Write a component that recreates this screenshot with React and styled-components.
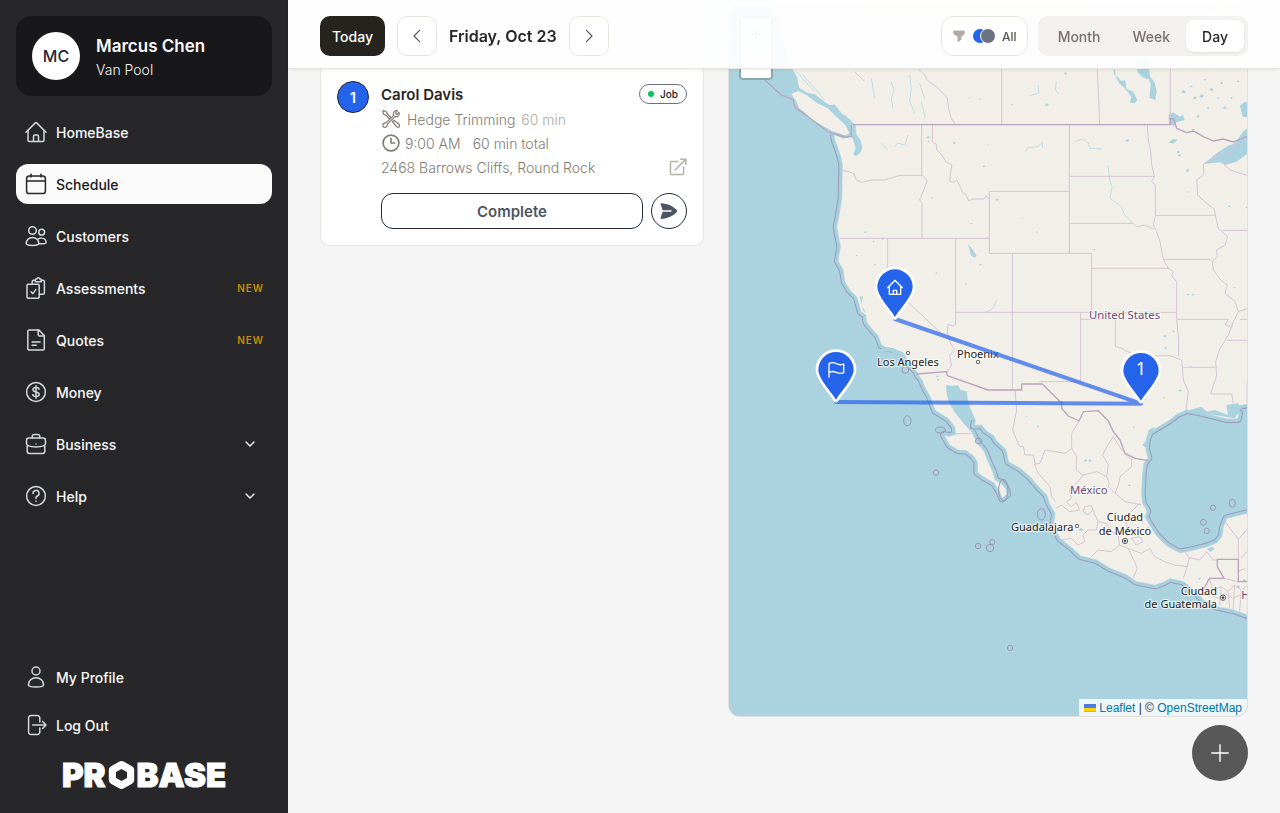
import React from 'react';
import styled, { createGlobalStyle, css } from 'styled-components';

const GlobalStyle = createGlobalStyle`
  *, *::before, *::after {
    box-sizing: border-box;
  }

  body {
    margin: 0;
    background: #f5f5f5;
    color: #292524;
    font-family: Inter, "Liberation Sans", sans-serif;
    font-size: 14px;
  }

  button {
    font: inherit;
    cursor: pointer;
  }
`;

const Layout = styled.div`
  display: grid;
  grid-template-columns: 288px minmax(0, 1fr);
  min-height: 100vh;
`;

// Sidebar
const Sidebar = styled.aside`
  position: sticky;
  top: 0;
  display: flex;
  flex-direction: column;
  height: 100vh;
  padding: 16px 16px 24px;
  background: #27272a;
  color: #fafafa;
`;

const Profile = styled.div`
  display: flex;
  align-items: center;
  gap: 16px;
  padding: 16px;
  border-radius: 16px;
  background: #18181a;
`;

const Avatar = styled.div`
  display: flex;
  align-items: center;
  justify-content: center;
  width: 48px;
  height: 48px;
  border-radius: 50%;
  background: #fff;
  color: #1f2937;
  font-size: 16px;
  font-weight: 500;
`;

const ProfileName = styled.div`
  font-size: 17px;
  font-weight: 600;
  line-height: 28px;
`;

const ProfileTeam = styled.div`
  font-size: 14px;
  font-weight: 300;
  line-height: 20px;
  color: #f4f4f5;
`;

const Nav = styled.nav`
  display: flex;
  flex-direction: column;
  gap: ${({ $gap }) => $gap};
  margin-top: ${({ $push }) => ($push ? 'auto' : '16px')};
`;

const navItem = css`
  display: flex;
  align-items: center;
  gap: 8px;
  height: 40px;
  padding: 0 8px;
  border: 0;
  border-radius: 12px;
  background: ${({ $active }) => ($active ? '#fafafa' : 'transparent')};
  color: ${({ $active }) => ($active ? '#18181b' : '#fafafa')};
  font-size: 14px;
  font-weight: 500;
  text-align: left;
  text-decoration: none;

  svg {
    flex: none;
    color: ${({ $active }) => ($active ? '#27272a' : '#d4d8dc')};
  }
`;

const NavLink = styled.a`
  ${navItem}
`;

const NavButton = styled.button`
  ${navItem}
`;

const NavLabel = styled.span`
  flex: 1;
`;

const NewTag = styled.span`
  color: #ca8a04;
  font-size: 10px;
  font-weight: 600;
  letter-spacing: 1px;
`;

// Keeps the group chevron clear of the row edge
const ChevronSlot = styled.span`
  display: flex;
  padding-right: 6px;

  svg {
    color: #fafafa;
  }
`;

const Logo = styled.div`
  display: flex;
  align-items: center;
  justify-content: center;
  gap: 2px;
  height: 28px;
  margin-top: 16px;
  color: #fff;
  font-size: 33px;
  font-weight: 900;
  line-height: 28px;
  -webkit-text-stroke: 1px #fff;
`;

// Toolbar
const Main = styled.main`
  min-width: 0;
`;

const Toolbar = styled.header`
  position: sticky;
  top: 0;
  z-index: 10;
  display: flex;
  align-items: center;
  justify-content: space-between;
  padding: 16px 32px 12px;
  border-bottom: 1px solid #e7e5e0;
  background: rgba(255, 255, 255, 0.88);
  backdrop-filter: blur(40px);
  box-shadow: 0 1px 3px rgba(0, 0, 0, 0.08);
`;

const ToolbarGroup = styled.div`
  display: flex;
  align-items: center;
  gap: ${({ $gap }) => $gap};
`;

const TodayButton = styled.button`
  height: 40px;
  padding: 0 12px;
  border: 0;
  border-radius: 10px;
  background: #26241f;
  color: #fff;
  font-weight: 500;
`;

const StepButton = styled.button`
  display: flex;
  align-items: center;
  justify-content: center;
  width: 40px;
  height: 40px;
  padding: 0;
  border: 1px solid #e7e5e0;
  border-radius: 10px;
  background: #fff;
  color: #57534e;
`;

const DateTitle = styled.h1`
  margin: 0;
  color: #292524;
  font-size: 16px;
  font-weight: 600;
`;

const FilterButton = styled.button`
  display: flex;
  align-items: center;
  gap: 6px;
  height: 40px;
  padding: 0 10px;
  border: 1px solid #e7e5e0;
  border-radius: 12px;
  background: #fff;
  color: #57534e;
  font-size: 12px;
  font-weight: 500;
`;

const Segments = styled.div`
  display: flex;
  padding: 4px;
  border-radius: 10px;
  background: rgba(231, 229, 228, 0.5);
`;

const Segment = styled.button`
  height: 32px;
  padding: 0 16px;
  border: 0;
  border-radius: 8px;
  background: ${({ $active }) => ($active ? '#fff' : 'transparent')};
  color: ${({ $active }) => ($active ? '#292524' : '#78716c')};
  font-weight: 500;
  box-shadow: ${({ $active }) => ($active ? '0 1px 2px rgba(0, 0, 0, 0.08)' : 'none')};
`;

// Schedule content, its top edge runs under the translucent toolbar
const Content = styled.div`
  display: grid;
  grid-template-columns: 384px minmax(0, 1fr);
  gap: 24px;
  margin-top: -64px;
  padding: 0 32px 96px;
`;

const JobList = styled.div`
  padding-top: 59px;
`;

const Card = styled.article`
  display: flex;
  gap: 12px;
  padding: 16px;
  border: 1px solid #e7e5e0;
  border-radius: 10px;
  background: #fff;
`;

const StopNumber = styled.div`
  display: flex;
  align-items: center;
  justify-content: center;
  flex: none;
  width: 32px;
  height: 32px;
  border: 1px solid #1f2937;
  border-radius: 50%;
  background: #2563eb;
  color: #fff;
  font-weight: 600;
`;

const CardBody = styled.div`
  flex: 1;
  min-width: 0;
`;

const CardHead = styled.div`
  display: flex;
  align-items: center;
  justify-content: space-between;
  height: 26px;
`;

const CardRow = styled.div`
  display: flex;
  align-items: center;
  gap: ${({ $gap }) => $gap || '6px'};
  height: 24px;
  color: #817d75;
  font-weight: 300;
`;

const AddressRow = styled(CardRow)`
  justify-content: space-between;
`;

const Customer = styled.h2`
  margin: 0;
  color: #292524;
  font-size: 15px;
  font-weight: 600;
`;

const Badge = styled.span`
  display: flex;
  align-items: center;
  gap: 6px;
  height: 20px;
  padding: 0 8px;
  border: 1px solid #6b7280;
  border-radius: 10px;
  color: #1c1917;
  font-size: 10px;
  font-weight: 500;

  &::before {
    content: "";
    width: 6px;
    height: 6px;
    border-radius: 50%;
    background: #00c950;
  }
`;

const Muted = styled.span`
  color: #aeaaa2;
`;

const Total = styled.span`
  margin-left: 8px;
`;

const OpenLink = styled.a`
  display: flex;
  color: #b5b2aa;
`;

const Actions = styled.div`
  display: flex;
  gap: 8px;
  margin-top: 14px;
`;

const CompleteButton = styled.button`
  flex: 1;
  height: 36px;
  border: 1px solid #1f2937;
  border-radius: 12px;
  background: #fff;
  color: #4b5563;
  font-size: 15px;
  font-weight: 600;
`;

const SendButton = styled.button`
  display: flex;
  align-items: center;
  justify-content: center;
  width: 36px;
  height: 36px;
  padding: 0;
  border: 1px solid #1f2937;
  border-radius: 50%;
  background: #fff;
  color: #4b5563;
`;

// Map
const MapPanel = styled.section`
  position: relative;
  height: 712px;
  overflow: hidden;
  border: 1px solid #e2e0da;
  border-radius: 12px;
  background: #aad3df;
`;

const MapSvg = styled.svg`
  display: block;
  width: 100%;
  height: 100%;

  .label {
    font-family: "Noto Sans", sans-serif;
    font-size: 33px;
    fill: #222;
    stroke: rgba(255, 255, 255, 0.7);
    stroke-width: 7px;
    stroke-linejoin: round;
    paint-order: stroke;
  }

  .country {
    fill: #6f4a77;
    font-size: 34px;
  }
`;

const ZoomControl = styled.div`
  position: absolute;
  top: 10px;
  left: 10px;
  display: flex;
  flex-direction: column;
  border: 2px solid rgba(0, 0, 0, 0.2);
  border-radius: 4px;
  overflow: hidden;
`;

const ZoomButton = styled.button`
  width: 30px;
  height: 30px;
  padding: 0;
  border: 0;
  background: #fff;
  color: #777;
  font-size: 20px;
  line-height: 28px;
`;

const Attribution = styled.div`
  position: absolute;
  right: 0;
  bottom: 0;
  display: flex;
  align-items: center;
  gap: 3px;
  height: 17px;
  padding: 0 5px;
  background: rgba(255, 255, 255, 0.8);
  color: #333;
  font-family: "Liberation Sans", sans-serif;
  font-size: 12px;

  a {
    color: #0078a8;
    text-decoration: none;
  }
`;

const AddButton = styled.button`
  position: fixed;
  right: 32px;
  bottom: 32px;
  z-index: 20;
  display: flex;
  align-items: center;
  justify-content: center;
  width: 56px;
  height: 56px;
  padding: 0;
  border: 0;
  border-radius: 50%;
  background: #585859;
  color: #fff;
`;

const icons = {
  home: (
    <>
      <path d="M2 12.2 11.3 2.9a1 1 0 0 1 1.4 0L22 12.2" />
      <path d="M4 10.5V20.2a1.3 1.3 0 0 0 1.3 1.3h13.4a1.3 1.3 0 0 0 1.3-1.3V10.5" />
      <path d="M9.5 21.3v-4.8a1.5 1.5 0 0 1 1.5-1.5h2a1.5 1.5 0 0 1 1.5 1.5v4.8" />
    </>
  ),
  calendar: (
    <>
      <rect x="2.6" y="4" width="18.8" height="17.5" rx="2.6" />
      <path d="M2.8 9h18.4M7 2.3V5M17 2.3V5" />
    </>
  ),
  customers: (
    <>
      <circle cx="8.5" cy="6.5" r="3.8" />
      <circle cx="17.7" cy="8.2" r="2.9" />
      <path d="M2.2 19.6c0-3.4 2.6-6.1 6.3-6.1s6.3 2.7 6.3 6.1c0 1-2.8 1.8-6.3 1.8s-6.3-.8-6.3-1.8Z" />
      <path d="M13.9 15.3a5 5 0 0 1 3.6-1.4c2.7 0 4.6 2 4.6 4.5 0 .9-2.3 1.4-5 1.4-.9 0-1.7 0-2.4-.2" />
    </>
  ),
  assessments: (
    <>
      <rect x="3" y="8.3" width="12.2" height="14" rx="1.2" />
      <path d="m7 15.7 1.8 1.9 3-4" />
      <path d="M8.2 8V5.5A1.3 1.3 0 0 1 9.5 4.2h1.8m5.8 0h2a1.3 1.3 0 0 1 1.3 1.3V17a1.3 1.3 0 0 1-1.3 1.3h-3.6" />
      <path d="M11.3 5.7V3.9c0-.5.4-.8.8-.8h.6c.3-1 .8-1.4 1.6-1.4s1.3.4 1.6 1.4h.6c.5 0 .8.3.8.8v1.8Z" />
    </>
  ),
  quotes: (
    <>
      <path d="M3.8 3.2c0-.8.6-1.3 1.3-1.3h9.6l5.6 5.6v13.3c0 .8-.6 1.3-1.3 1.3H5.1c-.7 0-1.3-.5-1.3-1.3Z" />
      <path d="M14.2 2v4.7c0 .8.5 1.3 1.3 1.3h4.7M8.1 14h8M8.1 17.2h4" />
    </>
  ),
  money: (
    <>
      <circle cx="12" cy="12" r="9.4" />
      <path d="M15 9.2c-.2-1.2-1.3-1.7-3-1.7s-3 .8-3 2.2c0 3.1 6.2 1.3 6.2 4.5 0 1.4-1.2 2.3-3.1 2.3s-3.2-.7-3.3-2M12 5.8v12.4" />
    </>
  ),
  business: (
    <>
      <path d="M8.2 6V4.6c0-1.300 1-2 2.300-2h3c1.300 0 2.300.7 2.300 2V6" />
      <path d="M4.900 6h14.200a2.400 2.400 0 0 1 2.400 2.400v3.200c0 1.900-3.800 3.300-9.500 3.300s-9.500-1.400-9.500-3.300V8.400A2.400 2.400 0 0 1 4.900 6Z" />
      <path d="M3.200 14v5.200c0 1.300.9 2.200 2.200 2.200h13.200c1.300 0 2.200-.9 2.200-2.200V14M12 11.900v.2" />
    </>
  ),
  help: (
    <>
      <circle cx="12" cy="12" r="9.4" />
      <path d="M9 9.500A3 3 0 1 1 13 12.200c-.7.300-1 .8-1 1.500v.8M12 17v.3" />
    </>
  ),
  profile: (
    <>
      <circle cx="12" cy="6" r="4" />
      <path d="M4.400 20c0-4.100 3.300-7.300 7.600-7.300s7.600 3.200 7.600 7.300c0 1.200-3.500 2-7.600 2s-7.600-.8-7.600-2Z" />
    </>
  ),
  logout: (
    <>
      <path d="M15.800 9V5a2.500 2.500 0 0 0-2.500-2.600H7.100A2.500 2.500 0 0 0 4.600 5v14a2.500 2.500 0 0 0 2.500 2.600h6.200a2.500 2.500 0 0 0 2.500-2.600v-4" />
      <path d="M8.700 12H22M18.600 8.500 22 12l-3.400 3.500" />
    </>
  ),
  tools: (
    <>
      <path d="m9 7.600 8.900 9c1 .2 2.100-.1 3 .8 1.200 1.200 1.200 2.900.2 3.900s-2.700 1-3.900-.2c-.9-.9-.7-2-.9-3L7.400 9.200C6 9.600 4.300 9.300 3.200 8.200 2.100 7.100 1.800 5.500 2.300 4.100L5 6.700 6.700 5 4.100 2.300c1.400-.5 3-.2 4.100.9 1.200 1.200 1.400 2.900.8 4.400Z" transform="matrix(-1 0 0 1 24 0)" />
      <path d="M3.400 1.800 1.900 3.300l2 3.600 2 .6 4.300 4.300 1.600-1.600-4.300-4.300-.6-2ZM13.800 15.300l4.900 5.900c.9 1 2.200 1 3 .2s.8-2.200-.2-3l-5.900-4.900Z" />
    </>
  ),
  clock: (
    <>
      <circle cx="12" cy="12" r="9.500" />
      <path d="M12 6.500V12h4.500" />
    </>
  ),
  external: (
    <>
      <path d="M12 4.500H3.200A1.200 1.200 0 0 0 2 5.700v15.100A1.200 1.200 0 0 0 3.200 22h15.100a1.200 1.200 0 0 0 1.200-1.200V12" />
      <path d="M8 16 22.500 1.500M15.500 1.500h7v7" />
    </>
  ),
  left: <path d="m15.500 4.500-7.500 7.500 7.500 7.500" />,
  right: <path d="m8.500 4.500 7.500 7.500-7.500 7.500" />,
  down: <path d="m6 9 6 6 6-6" />,
  plus: <path d="M12 3v18M3 12h18" />,
};

const Icon = ({ name, size = 24, weight = 1.5 }) => (
  <svg
    width={size}
    height={size}
    viewBox="0 0 24 24"
    fill="none"
    stroke="currentColor"
    strokeWidth={weight}
    strokeLinecap="round"
    strokeLinejoin="round"
    aria-hidden="true"
  >
    {icons[name]}
  </svg>
);

const navItems = [
  { icon: 'home', label: 'HomeBase' },
  { icon: 'calendar', label: 'Schedule', active: true },
  { icon: 'customers', label: 'Customers' },
  { icon: 'assessments', label: 'Assessments', isNew: true },
  { icon: 'quotes', label: 'Quotes', isNew: true },
  { icon: 'money', label: 'Money' },
];

const navGroups = [
  { icon: 'business', label: 'Business' },
  { icon: 'help', label: 'Help' },
];

// Pacific side from Washington down to the tip of Baja and up to the gulf head
const westCoast =
  'L318,208 320,225 326,240 338,275 343,300 342,350 341,400 333,450 326,485 330,510 337,545 330,588 345,615 350,650 365,675 385,695 392,715 398,740 413,750 415,770 430,790 450,812 460,840 475,848 500,852 520,865 535,880 545,898 565,918 570,930 580,942 592,970 605,992 615,1020 622,1037 660,1060 680,1085 682,1108 662,1114 648,1110 665,1140 690,1155 715,1157 735,1172 748,1190 748,1222 765,1235 798,1254 812,1275 823,1300 837,1288 834,1272 820,1255 802,1245 795,1222 783,1195 768,1158 748,1135 732,1102';
const gulfHead = 'L717,1085 700,1065 680,1040 665,1015 658,990 655,960 668,964 690,962 697,976 715,980 718,1000 724,1025 735,1050';
const mexicoCoast =
  'L742,1068 738,1082 760,1080 775,1098 797,1112 806,1128 830,1150 836,1162 841,1190 876,1210 906,1235 931,1265 956,1290 964,1315 981,1345 976,1385 996,1420 1031,1448 1058,1473 1106,1485 1146,1510 1196,1530 1226,1550 1282,1561 1308,1551 1326,1541 1366,1550 1396,1572 1426,1605 1466,1625 1516,1635 1600,1665';
const gulfCoast =
  'L1600,1335 1556,1345 1496,1360 1486,1385 1481,1415 1466,1433 1436,1445 1396,1455 1356,1463 1346,1458 1316,1442 1286,1412 1268,1385 1251,1355 1258,1338 1244,1315 1241,1285 1244,1225 1248,1195 1261,1178 1254,1155 1256,1125 1266,1100 1296,1083 1326,1065 1346,1048 1376,1035 1416,1042 1456,1052 1496,1062 1529,1062 1533,1045 1514,1030 1536,1022 1600,1010';
const open = (points) => `M${points.slice(1)}`;

const land = `M130,-177 L160,-90 180,-20 192,12 206,35 212,68 235,83 262,90 290,112 312,125 332,145 352,152 368,168 382,180 384,208 396,225 402,245 397,262 384,273 377,268 384,250 376,222 368,215 345,220 ${westCoast} ${gulfHead} ${mexicoCoast} ${gulfCoast} 1600,-200 130,-200 Z`;
const vancouver = 'M190,87 L210,78 235,90 268,115 300,130 325,155 352,180 364,205 350,211 312,198 280,180 255,166 235,147 212,128 205,108 Z';

const offshore = [open(westCoast), open(mexicoCoast), open(gulfCoast)].join(' ');

// State lines, northern half
const statesNorth =
  'M572,-20 L572,12 590,30 598,46 625,65 645,85 658,98 662,130 670,160 682,178 M821,-20V178 M581,180V330 M613,180V232L625,238 627,255 640,268 655,292 672,300 668,320 665,350 678,352 686,345 694,360 704,382 714,388 722,407 735,402 768,402 774,392 784,404 M343,317 L360,319 378,326 385,345 400,352 430,345 470,345 515,331H583L598,347 589,370 575,405 582,415V520 M335,520H784 M1024,379H784V565H1091V742 M479,520V655L640,805 M683,520V778L675,783 660,778 658,805 668,835 680,855 665,870 670,900 655,925 M683,742H1346 M853,565V975 M1108,-20V12L1115,178 M1327,-20V160 M1024,180V565 M1024,334H1279 M1024,475H1214L1228,485 1250,480 1276,492 M1091,610H1323 M1258,182L1261,225 1268,260 1271,300 1279,334 1271,350 1282,360V451 M1282,451H1461 M1282,451L1276,480 1286,500 1296,530 1306,583 1321,610 1336,620 1331,632 1346,650V763L1352,825V875 M1306,583H1446L1453,590 M1346,763H1501L1491,778 1506,785 1515,785 M1058,742V950H934 M1058,763H1162V845L1178,848 1196,860 M1427,297V330L1406,345 1409,390 1436,415 1459,432 1464,460 1471,490 1499,515 1491,540 1466,555 1468,575 1453,590 1456,615 1478,645 1498,660 1491,685 1521,710 1531,740 1516,770 1501,810 1476,850 1463,890 1466,930 1448,987H1511L1516,1015 M1483,496H1560 M1531,740L1560,730 M1536,763H1560 M1496,826H1560 M1427,297L1481,265H1506L1521,230 M1506,265L1489,300 1506,315 1560,332';

// State lines, southern half
const statesSouth =
  'M1196,858L1230,872 1291,872 1326,872 1361,885 1366,945 1381,980 1374,1035 M1366,907H1461 M1557,955V1010 M680,1106H730 M861,975L866,1035 854,1095 866,1125 876,1145 886,1145 891,1170 916,1170 921,1195 M1053,1068L1031,1105 1031,1150 1011,1165 951,1155 936,1195 919,1197 931,1225 966,1265 971,1295 983,1310 M1031,1150L1046,1175 1044,1215 1066,1230 1106,1220 1136,1235 1144,1255 M1156,1115L1136,1145 1124,1170 1141,1200 1136,1235 M1156,1115L1181,1155 1211,1185V1205L1176,1235 1171,1260 1161,1285 1141,1265 1144,1255 M1161,1285L1191,1310 1241,1320 M1066,1230L1050,1250 1025,1275 1030,1300 1015,1310 1030,1325 1045,1312 1055,1335 1025,1340 1000,1320 985,1330 M1065,1340L1070,1325 1090,1322 1095,1335 1080,1350Z M1095,1335L1110,1370 1105,1395 1080,1395 1065,1410 1070,1430 1050,1440 1030,1420 1000,1425 M1110,1370L1135,1375 1150,1400 1170,1410 1175,1440 1200,1450 1215,1480 1228,1510 1215,1540 M1090,1475L1110,1455 1150,1460 1175,1440 M1200,1395L1190,1360 1215,1335 1235,1315 M1210,1420L1235,1415 1245,1430 1225,1440Z M1200,1450L1240,1465 1265,1450 1280,1475 1310,1490 1340,1500 1378,1505 1366,1540 M1235,1400L1265,1385 M1378,1505L1384,1478 1370,1460 M1384,1478L1416,1485 1436,1460 1456,1485H1468 M1491,1370L1531,1423 1560,1390 M1531,1423V1483';

const borders =
  'M375,179H1327V160L1337,162 1346,190 1376,203 1396,198 1410,205 1426,215 1456,228 1486,222 1516,231 1560,213 M565,927L655,920 658,932 780,975H881V957H943L976,990 1001,1015V1030L1021,1053 1053,1068 1066,1040 1111,1037 1141,1068 1156,1100 1176,1125 1191,1165 1221,1180 1261,1187 M110,45L160,90 195,104 202,128 240,155 300,200 350,216 370,214 370,180 M1531,1483H1468V1505L1488,1540H1444L1426,1575 M1531,1483V1550H1560';

const guatemalaMesh =
  'M1444,1540L1455,1575 1480,1565 1500,1580 1520,1560 1540,1575 1560,1560 M1450,1590L1470,1600 1490,1585 1515,1600 1535,1590 1560,1605 M1480,1565L1475,1620 M1500,1580L1505,1630 M1520,1560L1515,1635 M1540,1575L1535,1640 M1540,1480L1555,1460 M1531,1520L1550,1510 M1488,1540L1531,1550';

const water =
  'M1427,297L1466,265 1500,242 1521,235 1545,200 1560,188V265L1526,290 1491,300 1475,292Z M1154,-20L1158,28 1171,38 1178,48 1191,45 1196,72 1216,80 1228,105 1220,114 1206,113 1210,95 1190,70 1174,55 1165,40Z M1226,-20L1228,20 1245,38 1262,42 1268,58 1264,98 1282,105 1286,78 1279,50 1266,35 1262,-10Z M1536,122L1551,110 1560,112V155L1544,156Z M720,540L730,548 746,572 740,578 730,572Z M1324,178L1321,150 1335,142 1355,155 1365,150 1370,165 1345,172 1337,184Z M1322,232L1335,222 1350,224 1335,236Z M300,122L320,118 345,150 368,165 376,183 355,178 330,152Z M395,695L405,693 400,720 415,745 405,735Z M1378,1037L1420,1025 1436,1040 1460,1035 1500,1050 1495,1020 1530,1015 1540,1030 1520,1060 1460,1050Z M1243,1140L1252,1130 1262,1095 1280,1085 1270,1110 1256,1150Z M1436,1452L1450,1445 1460,1452 1448,1460Z M455,853L478,845 500,852 525,862 540,885 520,880 490,860 460,858Z';

const streams =
  'M490,50L498,75 490,100 495,130 M545,30L550,70 545,110 560,145 M580,110L592,160 M500,245L510,235 530,240 540,210 M890,260L900,248 930,245 942,232 944,248 M1040,230L1062,222 1080,232 1086,250 1120,252 M1140,300L1145,345 1152,365 1146,400 1180,425 1190,450 1212,472 M930,60L932,85 905,92 M985,50L982,75 992,87 M773,742L795,730 805,705 M460,235L478,255 M575,55L590,100 M430,40L440,100 M380,20L410,50 M205,20L260,80 M225,30L290,105';

const ponds = [
  [600, 218, 5], [678, 235, 5], [602, 230, 3], [768, 305, 4], [807, 405, 5], [722, 100, 2], [755, 103, 3], [780, 240, 2],
  [412, 503, 4], [464, 522, 5], [436, 530, 3], [612, 400, 3], [730, 476, 3], [757, 600, 4], [713, 657, 3], [625, 625, 3],
  [492, 603, 3], [440, 600, 3], [386, 572, 3], [775, 520, 4], [1012, 27, 5], [956, 121, 6], [851, 120, 3], [1197, 228, 6],
  [1350, 262, 5], [1354, 272, 5], [1378, 318, 6], [1380, 382, 3], [1098, 555, 4], [926, 502, 3], [882, 460, 2],
  [1380, 690, 4], [1395, 690, 4], [1310, 815, 5], [1312, 850, 4], [1336, 800, 4], [1366, 82, 7], [1400, 100, 6], [1420, 95, 7],
  [1450, 75, 6], [1430, 45, 4], [1480, 55, 5], [1490, 130, 6], [1410, 155, 5], [1395, 195, 4], [1510, 100, 4], [1530, 50, 4],
  [1470, 100, 4], [1440, 130, 4], [1390, 65, 4], [1504, 425, 4], [1557, 428, 5], [1520, 668, 3], [628, 935, 4], [630, 945, 4],
  [1308, 998, 3], [1356, 978, 5], [1204, 1262, 4], [930, 1085, 3], [895, 1055, 2], [1085, 1188, 5], [1072, 1188, 5],
  [1058, 1396, 7], [1530, 1567, 6], [1548, 1548, 6], [1414, 1542, 4], [1252, 1005, 3], [1388, 905, 3], [1218, 1087, 3],
];

const islets = [
  [538, 1067, 11, 15], [624, 1223, 8, 8], [750, 1443, 8, 8], [793, 1431, 8, 8], [786, 1449, 11, 11], [637, 1095, 15, 9],
  [1455, 1328, 8, 8], [1513, 1315, 9, 12], [1426, 1372, 9, 9], [1436, 1398, 8, 8], [940, 1348, 12, 17], [532, 915, 10, 10],
  [826, 1275, 14, 32], [846, 1749, 8, 8], [752, 1128, 10, 8],
];

const Pin = ({ x, y, children }) => (
  <g transform={`translate(${x} ${y})`}>
    <path
      d="M0 0C-8-16-53-62-53-90a53 53 0 0 1 106 0C53-62 8-16 0 0Z"
      fill="#2563eb"
      stroke="#fff"
      strokeWidth="16"
      strokeLinejoin="round"
      paintOrder="stroke"
    />
    {children}
  </g>
);

const City = ({ x, y, capital }) => (
  <g fill="#fff" stroke="#444" strokeWidth="2.500">
    <circle cx={x} cy={y} r={capital ? 8 : 5} />
    {capital && <circle cx={x} cy={y} r="3" fill="#444" />}
  </g>
);

const RouteMap = () => (
  <MapSvg viewBox="3 -177 1554 2130" preserveAspectRatio="xMidYMid slice" role="img" aria-label="Route map">
    <rect x="-2000" y="-400" width="6000" height="3000" fill="#aad3df" />
    <g fill="none" strokeLinejoin="round">
      <path d={offshore} stroke="#9b9ab8" strokeWidth="24" />
      <path d={offshore} stroke="#a6d0dd" strokeWidth="18" />
    </g>
    <path d={land} fill="#f2efe9" stroke="#a6d0dd" strokeWidth="2" />
    <path d={vancouver} fill="#f2efe9" />
    <path d={water} fill="#aad3df" />
    <path d={streams} fill="none" stroke="#bfdde4" strokeWidth="3" strokeLinejoin="round" />
    {ponds.map(([x, y, r]) => (
      <path key={`${x}-${y}`} d={`M${x - r},${y}l${r},${-r} ${r},${r / 2} ${-r / 2},${r}Z`} fill="#aad3df" />
    ))}
    <g fill="none" strokeLinejoin="round">
      <path d={`${statesNorth} ${statesSouth} ${guatemalaMesh}`} stroke="#d5c5d2" strokeWidth="3" />
      <path d={borders} stroke="#b9a4bd" strokeWidth="4" />
      {islets.map(([x, y, rx, ry]) => (
        <ellipse key={`${x}-${y}`} cx={x} cy={y} rx={rx} ry={ry} stroke="#9f95b4" strokeWidth="3" />
      ))}
    </g>

    <City x={540} y={864} />
    <City x={750} y={891} />
    <City x={1047} y={1383} />
    <City x={1191} y={1428} capital />
    <City x={1485} y={1598} capital />
    <text className="label country" x="1083" y="762">United States</text>
    <text className="label country" x="1026" y="1288">México</text>
    <text className="label" x="447" y="903">Los Angeles</text>
    <text className="label" x="687" y="878">Phoenix</text>
    <text className="label" x="849" y="1398">Guadalajara</text>
    <text className="label" x="1191" y="1369" textAnchor="middle">Ciudad</text>
    <text className="label" x="1191" y="1409" textAnchor="middle">de México</text>
    <text className="label" x="1467" y="1590" textAnchor="end">Ciudad</text>
    <text className="label" x="1467" y="1629" textAnchor="end">de Guatemala</text>
    <text className="label country" x="1540" y="1602">H</text>

    <path
      d="M501,762L1239,1016L324,1011"
      fill="none"
      stroke="#2563eb"
      strokeOpacity="0.7"
      strokeWidth="12"
      strokeLinecap="round"
      strokeLinejoin="round"
    />
    <Pin x={501} y={756}>
      <g fill="none" stroke="#fff" strokeWidth="4" strokeLinejoin="round" strokeLinecap="round">
        <path d="M-22-88 0-110 22-88M-17-92v24h34v-24M-5-68v-12h10v12" />
      </g>
    </Pin>
    <Pin x={324} y={1004}>
      <path
        d="M-21-68v-40c8-5 16-3 22 0s14 5 22 1v26c-8 4-15 2-22-1s-14-4-22 0"
        fill="none"
        stroke="#fff"
        strokeWidth="4"
        strokeLinejoin="round"
        strokeLinecap="round"
      />
    </Pin>
    <Pin x={1239} y={1007}>
      <text y="-76" textAnchor="middle" fill="#fff" fontFamily="Noto Sans, sans-serif" fontSize="54">1</text>
    </Pin>
  </MapSvg>
);

const App = () => (
  <>
    <GlobalStyle />
    <Layout>
      <Sidebar>
        <Profile>
          <Avatar>MC</Avatar>
          <div>
            <ProfileName>Marcus Chen</ProfileName>
            <ProfileTeam>Van Pool</ProfileTeam>
          </div>
        </Profile>
        <Nav $gap="12px" aria-label="Main">
          {navItems.map(({ icon, label, active, isNew }) => (
            <NavLink key={label} href="#" $active={active}>
              <Icon name={icon} />
              <NavLabel>{label}</NavLabel>
              {isNew && <NewTag>NEW</NewTag>}
            </NavLink>
          ))}
          {navGroups.map(({ icon, label }) => (
            <NavButton key={label} type="button" aria-expanded="false">
              <Icon name={icon} />
              <NavLabel>{label}</NavLabel>
              <ChevronSlot>
                <Icon name="down" size={16} weight={2} />
              </ChevronSlot>
            </NavButton>
          ))}
        </Nav>
        <Nav $gap="8px" $push aria-label="Account">
          <NavLink href="#">
            <Icon name="profile" />
            <NavLabel>My Profile</NavLabel>
          </NavLink>
          <NavButton type="button">
            <Icon name="logout" />
            <NavLabel>Log Out</NavLabel>
          </NavButton>
        </Nav>
        <Logo>
          <span>PR</span>
          <svg width="27" height="28" viewBox="0 0 27 28" aria-label="O">
            <path
              d="M11 .8a5 5 0 0 1 5 0l8 4.400a4 4 0 0 1 2.200 3.600v10.400a4 4 0 0 1-2.200 3.600l-8 4.400a5 5 0 0 1-5 0l-8-4.400A4 4 0 0 1 .8 19.200V8.800A4 4 0 0 1 3 5.200ZM13.500 8 8 11v6l5.500 3 5.500-3v-6Z"
              fill="currentColor"
              fillRule="evenodd"
            />
          </svg>
          <span>BASE</span>
        </Logo>
      </Sidebar>

      <Main>
        <Toolbar>
          <ToolbarGroup $gap="12px">
            <TodayButton type="button">Today</TodayButton>
            <StepButton type="button" aria-label="Previous day">
              <Icon name="left" size={18} />
            </StepButton>
            <DateTitle>Friday, Oct 23</DateTitle>
            <StepButton type="button" aria-label="Next day">
              <Icon name="right" size={18} />
            </StepButton>
          </ToolbarGroup>
          <ToolbarGroup $gap="10px">
            <FilterButton type="button">
              <svg width="14" height="14" viewBox="0 0 14 14" aria-hidden="true">
                <path d="M2 1.500h10a.8.8 0 0 1 .8.8v1.500c0 1.200-1.500 2.700-3.300 3.700v3L6.200 13H5.500V7.500C3 6.300 1.200 5 1.200 3.800V2.300a.8.8 0 0 1 .8-.8Z" fill="#b0aca3" />
              </svg>
              <svg width="24" height="16" viewBox="0 0 24 16" aria-hidden="true">
                <circle cx="8" cy="8" r="7" fill="#2563eb" />
                <circle cx="16" cy="8" r="7.500" fill="#6b7280" stroke="#fff" />
              </svg>
              All
            </FilterButton>
            <Segments>
              <Segment type="button">Month</Segment>
              <Segment type="button">Week</Segment>
              <Segment type="button" $active>Day</Segment>
            </Segments>
          </ToolbarGroup>
        </Toolbar>

        <Content>
          <JobList>
            <Card>
              <StopNumber>1</StopNumber>
              <CardBody>
                <CardHead>
                  <Customer>Carol Davis</Customer>
                  <Badge>Job</Badge>
                </CardHead>
                <CardRow>
                  <Icon name="tools" size={20} />
                  <span>Hedge Trimming</span>
                  <Muted>60 min</Muted>
                </CardRow>
                <CardRow $gap="4px">
                  <Icon name="clock" size={20} weight={2} />
                  <span>9:00 AM</span>
                  <Total>60 min total</Total>
                </CardRow>
                <AddressRow>
                  <span>2468 Barrows Cliffs, Round Rock</span>
                  <OpenLink href="#" aria-label="Open in maps">
                    <Icon name="external" size={18} weight={2} />
                  </OpenLink>
                </AddressRow>
                <Actions>
                  <CompleteButton type="button">Complete</CompleteButton>
                  <SendButton type="button" aria-label="Send">
                    <svg width="18" height="18" viewBox="0 0 18 18" aria-hidden="true">
                      <path d="M1.200 1.200C8 1.500 13 4 17 8.300a1 1 0 0 1 0 1.400C13 14 8 16.500 1.200 16.800c-.5 0-.8-.4-.6-.9L2.600 9.700H11.500V8.300H2.600L.6 2.100c-.2-.5.1-.9.6-.9Z" fill="currentColor" />
                    </svg>
                  </SendButton>
                </Actions>
              </CardBody>
            </Card>
          </JobList>
          <MapPanel>
            <RouteMap />
            <ZoomControl>
              <ZoomButton type="button" aria-label="Zoom in">+</ZoomButton>
              <ZoomButton type="button" aria-label="Zoom out" />
            </ZoomControl>
            <Attribution>
              <svg width="12" height="8" viewBox="0 0 12 8" aria-hidden="true">
                <path fill="#4c7be1" d="M0 0h12v4H0z" />
                <path fill="#ffd500" d="M0 4h12v3H0z" />
                <path fill="#e0bc00" d="M0 7h12v1H0z" />
              </svg>
              <span>
                <a href="#">Leaflet</a> | © <a href="#">OpenStreetMap</a>
              </span>
            </Attribution>
          </MapPanel>
        </Content>
      </Main>
    </Layout>
    <AddButton type="button" aria-label="Add">
      <Icon name="plus" size={22} weight={1.5} />
    </AddButton>
  </>
);

export default App;
